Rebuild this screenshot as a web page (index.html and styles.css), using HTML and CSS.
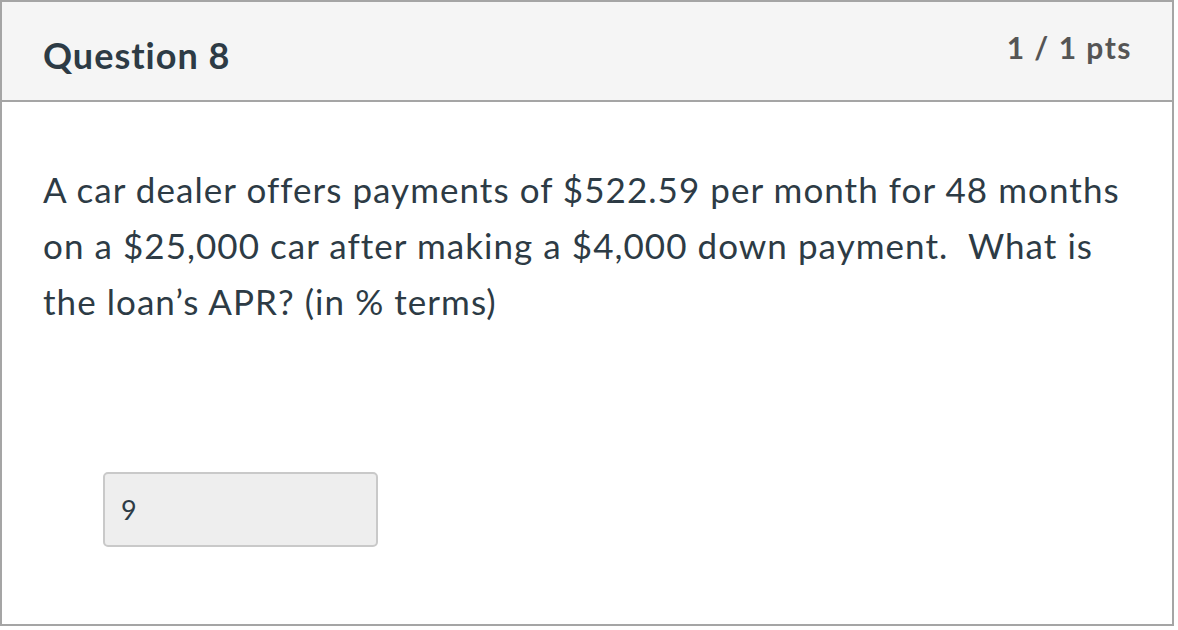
FILE: index.html
```html
<!DOCTYPE html>
<html>
<head>
<meta charset="utf-8">
<link rel="stylesheet" href="styles.css">
</head>
<body>
<div class="card">
  <div class="header">
    <h2 class="title">Question 8</h2>
    <div class="pts">1 / 1 pts</div>
  </div>
  <div class="body">
    <p class="text">A car dealer offers payments of $522.59 per month for 48 months on a $25,000 car after making a $4,000 down payment.&nbsp; What is the loan’s APR? (in % terms)</p>
    <div class="answer">9</div>
  </div>
</div>
</body>
</html>
```
FILE: styles.css
```css
html, body {
  margin: 0;
  padding: 0;
  background: #fff;
}
body {
  width: 1178px;
  height: 630px;
  overflow: hidden;
  font-family: Lato, "Open Sans", sans-serif;
}
.card {
  width: 1174px;
  height: 626px;
  box-sizing: border-box;
  border: 2px solid #a5a5a5;
  display: flex;
  flex-direction: column;
}
.header {
  height: 100px;
  box-sizing: border-box;
  background: #f5f5f5;
  border-bottom: 2px solid #a5a5a5;
  display: flex;
  align-items: center;
  justify-content: space-between;
  padding: 0 40px 0 41px;
}
.title {
  margin: 8px 0 0;
  font-size: 36px;
  letter-spacing: 1px;
  font-weight: 700;
  color: #2d3b45;
}
.pts {
  font-size: 30px;
  letter-spacing: 1.5px;
  font-weight: 700;
  color: #555555;
  margin-top: -8px;
}
.body {
  padding: 59px 41px 0;
}
.text {
  margin: 0;
  font-size: 35px;
  letter-spacing: 1.05px;
  line-height: 56px;
  color: #2d3b45;
}
.answer {
  margin: 143px 0 0 60px;
  width: 275px;
  height: 75px;
  box-sizing: border-box;
  border: 2px solid #c9c9c9;
  border-radius: 5px;
  background: #eeeeee;
  color: #2d3b45;
  font-size: 27px;
  padding: 0 0 0 16px;
  display: flex;
  align-items: center;
}
```
